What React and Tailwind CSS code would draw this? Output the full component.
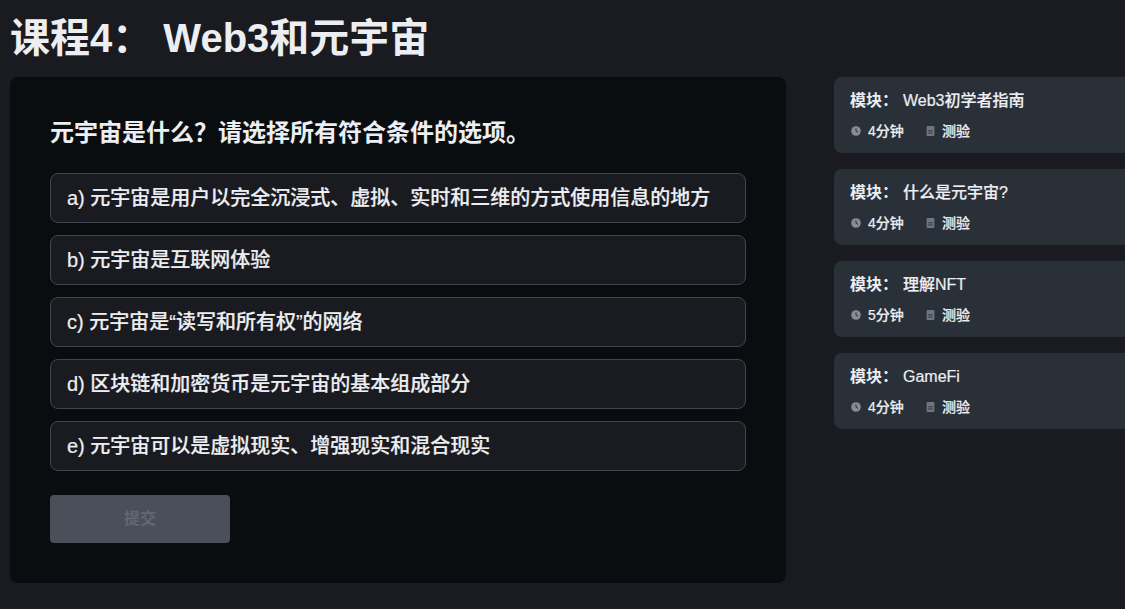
import React from 'react';

const OPTIONS = [
  'a) 元宇宙是用户以完全沉浸式、虚拟、实时和三维的方式使用信息的地方',
  'b) 元宇宙是互联网体验',
  'c) 元宇宙是“读写和所有权”的网络',
  'd) 区块链和加密货币是元宇宙的基本组成部分',
  'e) 元宇宙可以是虚拟现实、增强现实和混合现实',
];

const MODULES = [
  { title: 'Web3初学者指南', mins: '4分钟' },
  { title: '什么是元宇宙?', mins: '4分钟' },
  { title: '理解NFT', mins: '5分钟' },
  { title: 'GameFi', mins: '4分钟' },
];

function ClockIcon() {
  return (
    <svg viewBox="0 0 10 10" className="w-[10px] h-[10px] shrink-0">
      <circle cx="5" cy="5" r="4.8" fill="#868c96" />
      <path d="M5 2.4V5.2L7 6.4" stroke="#2a3038" strokeWidth="1" fill="none" />
    </svg>
  );
}

function DocIcon() {
  return (
    <svg viewBox="0 0 10 10" className="w-[10px] h-[10px] shrink-0">
      <path d="M0.6 1a1 1 0 0 1 1-1H7.4a1 1 0 0 1 1 1v8a1 1 0 0 1-1 1H1.6a1 1 0 0 1-1-1z" fill="#6f7580" />
      <path d="M2.2 4.8h4.4M2.2 7h4.4" stroke="#2a3038" strokeWidth="0.9" />
    </svg>
  );
}

function ModuleCard({ title, mins }) {
  return (
    <div className="w-[320px] h-[76px] shrink-0 rounded-lg bg-[#2a3038] pl-4 pt-[14px]">
      <div className="flex items-center h-[20px] text-[16px] text-[#edeef2]">
        <span className="font-bold w-[53px] shrink-0">模块：</span>
        <span className="font-medium [-webkit-text-stroke:0.2px_#edeef2]">{title}</span>
      </div>
      <div className="flex items-center mt-[12px] ml-px h-[16px] text-[14px] font-medium text-[#edeef2] [-webkit-text-stroke:0.2px_#edeef2]">
        <ClockIcon />
        <span className="ml-[7px] w-[58px]">{mins}</span>
        <DocIcon />
        <span className="ml-[6px]">测验</span>
      </div>
    </div>
  );
}

export default function App() {
  return (
    <div
      className="w-[1125px] h-[609px] overflow-hidden bg-[#1a1b20] text-[#edeef2]"
      style={{ fontFamily: '"Liberation Sans", "Noto Sans CJK SC", sans-serif' }}
    >
      <h1 className="h-[75px] pl-[10px] flex items-center text-[40px] font-bold leading-none">
        课程4： Web3和元宇宙
      </h1>
      <div className="mt-[2px] flex items-start">
        <div className="w-[776px] h-[506px] shrink-0 ml-[10px] rounded-lg bg-[#0a0d10] p-10">
          <h2 className="h-[32px] flex items-center text-[24px] font-bold">
            元宇宙是什么？请选择所有符合条件的选项。
          </h2>
          <div className="mt-[24px] flex flex-col gap-3">
            {OPTIONS.map((opt) => (
              <div
                key={opt}
                className="h-[50px] flex items-center px-4 rounded-lg border border-[#41454e] bg-[#1a1b20] text-[20px] font-medium [-webkit-text-stroke:0.2px_#edeef2]"
              >
                {opt}
              </div>
            ))}
          </div>
          <button className="mt-6 w-[180px] h-[48px] rounded bg-[#4a4f59] text-[#626771] text-[16px] font-bold">
            提交
          </button>
        </div>
        <div className="ml-12 flex flex-col gap-4 shrink-0">
          {MODULES.map((m) => (
            <ModuleCard key={m.title} {...m} />
          ))}
        </div>
      </div>
    </div>
  );
}
